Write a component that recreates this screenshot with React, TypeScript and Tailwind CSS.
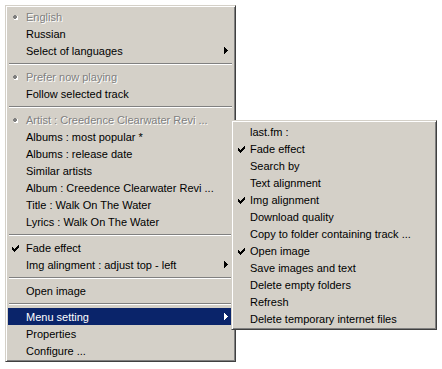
import type { ReactNode } from 'react';

type Item =
  | { sep: true }
  | {
      sep?: false;
      label: string;
      disabled?: boolean;
      radio?: boolean;
      checked?: boolean;
      submenu?: boolean;
      active?: boolean;
    };

const MAIN: Item[] = [
  { label: 'English', disabled: true, radio: true },
  { label: 'Russian' },
  { label: 'Select of languages', submenu: true },
  { sep: true },
  { label: 'Prefer now playing', disabled: true, radio: true },
  { label: 'Follow selected track' },
  { sep: true },
  { label: 'Artist : Creedence Clearwater Revi ...', disabled: true, radio: true },
  { label: 'Albums : most popular *' },
  { label: 'Albums : release date' },
  { label: 'Similar artists' },
  { label: 'Album : Creedence Clearwater Revi ...' },
  { label: 'Title : Walk On The Water' },
  { label: 'Lyrics : Walk On The Water' },
  { sep: true },
  { label: 'Fade effect', checked: true },
  { label: 'Img alingment : adjust top - left', submenu: true },
  { sep: true },
  { label: 'Open image' },
  { sep: true },
  { label: 'Menu setting', submenu: true, active: true },
  { label: 'Properties' },
  { label: 'Configure ...' },
];

const SUB: Item[] = [
  { label: 'last.fm :' },
  { label: 'Fade effect', checked: true },
  { label: 'Search by' },
  { label: 'Text alignment' },
  { label: 'Img alignment', checked: true },
  { label: 'Download quality' },
  { label: 'Copy to folder containing track ...' },
  { label: 'Open image', checked: true },
  { label: 'Save images and text' },
  { label: 'Delete empty folders' },
  { label: 'Refresh' },
  { label: 'Delete temporary internet files' },
];

// classic 7x7 check glyph, drawn pixel by pixel
function CheckMark({ color }: { color: string }) {
  const rows = ['......#', '.....##', '#...###', '##.###.', '#####..', '.###...', '..#....'];
  return (
    <svg width="7" height="7" viewBox="0 0 7 7" shapeRendering="crispEdges">
      {rows.flatMap((r, y) =>
        r.split('').map((c, x) => (c === '#' ? <rect key={`${x}-${y}`} x={x} y={y} width="1" height="1" fill={color} /> : null)),
      )}
    </svg>
  );
}

function Bullet() {
  return (
    <svg width="7" height="7" viewBox="0 0 7 7" shapeRendering="crispEdges">
      <rect x="2" y="2" width="4" height="4" fill="#ffffff" />
      <rect x="2" y="1" width="2" height="4" fill="#808080" />
      <rect x="1" y="2" width="4" height="2" fill="#808080" />
    </svg>
  );
}

function Arrow({ color }: { color: string }) {
  return (
    <svg width="4" height="7" viewBox="0 0 4 7" shapeRendering="crispEdges">
      <path d="M0 0h1v7h-1zM1 1h1v5h-1zM2 2h1v3h-1zM3 3h1v1h-1z" fill={color} />
    </svg>
  );
}

function MenuRow({ item, textPad }: { item: Item; textPad: string }) {
  if (item.sep) {
    return (
      <div className="h-[9px] px-px pt-[4px]">
        <div className="h-px bg-[#808080]" />
        <div className="h-px bg-white" />
      </div>
    );
  }
  const fg = item.active ? '#ffffff' : '#000000';
  let mark: ReactNode = null;
  if (item.radio) mark = <Bullet />;
  if (item.checked) mark = <CheckMark color={fg} />;
  return (
    <div
      className={`relative flex h-[17px] items-center ${textPad} pr-[5px] ${
        item.active ? 'bg-[#0a246a] text-white' : 'text-black'
      }`}
    >
      <span className="absolute left-[4px] top-[6px] flex">{mark}</span>
      <span
        className={`flex-1 whitespace-nowrap pt-px leading-[16px] ${
          item.disabled ? 'text-[#808080] [text-shadow:1px_1px_0_#ffffff]' : ''
        }`}
      >
        {item.label}
      </span>
      {item.submenu && <Arrow color={fg} />}
    </div>
  );
}

function Menu({ items, className, textPad }: { items: Item[]; className: string; textPad: string }) {
  return (
    <div
      className={`border border-t-[#d4d0c8] border-l-[#d4d0c8] border-r-[#404040] border-b-[#404040] bg-[#d4d0c8] p-px shadow-[inset_1px_1px_0_#ffffff,inset_-1px_-1px_0_#808080] ${className}`}
    >
      <div className="p-px">
        {items.map((it, i) => (
          <MenuRow key={i} item={it} textPad={textPad} />
        ))}
      </div>
    </div>
  );
}

export default function App() {
  return (
    <div className="relative h-[369px] w-[442px] overflow-hidden bg-white font-['Liberation_Sans',Arial,sans-serif] text-[11px]">
      <Menu items={MAIN} className="ml-[5px] mt-[5px] w-[231px]" textPad="pl-[18px]" />
      <Menu items={SUB} className="absolute left-[231px] top-[120px] w-[206px]" textPad="pl-[16px]" />
    </div>
  );
}
